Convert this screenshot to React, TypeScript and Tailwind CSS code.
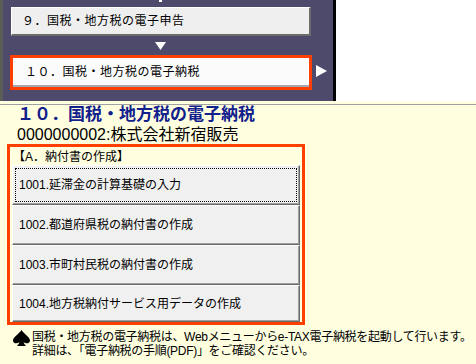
import React from 'react';

const menuItems = [
  '1001.延滞金の計算基礎の入力',
  '1002.都道府県税の納付書の作成',
  '1003.市町村民税の納付書の作成',
  '1004.地方税納付サービス用データの作成',
];

const App: React.FC = () => {
  return (
    <div className="w-[476px] h-[364px] overflow-hidden bg-[#ffffe0] text-black font-['Liberation_Sans','Noto_Sans_CJK_JP',sans-serif]">
      {/* top navigation strip */}
      <div className="flex h-[101px]">
        <div className="w-[3px] bg-[#5b5e57]" />
        <div className="w-[330px] bg-[#4e4a6b] flex flex-col pl-[8px]">
          <div className="h-[7px] pl-[148px]">
            <div className="w-[3px] h-[2px] bg-white" />
          </div>
          <div className="w-[300px] h-[29px] flex items-center pl-[10px] bg-[#efefef] border-t border-l border-white border-b-2 border-r-2 border-b-[#6b6b6b] border-r-[#6b6b6b] text-[12px] leading-none tracking-[0.5px]">
            ９．国税・地方税の電子申告
          </div>
          <div className="h-[19px] pl-[144px] pt-[6px]">
            <svg width="11" height="8" viewBox="0 0 11 8">
              <polygon points="0,0 11,0 5.5,8" fill="white" />
            </svg>
          </div>
          <div className="flex items-start -ml-[1px]">
            <div className="w-[302px] h-[35px] border-[3px] border-[#ff4000] bg-[#fbfbfb] flex flex-col">
              <div className="flex-1 flex items-center pl-[12px] text-[12px] leading-none tracking-[0.5px]">
                １０．国税・地方税の電子納税
              </div>
              <div className="h-[2px] bg-[#a8a8b0]" />
            </div>
            <svg width="11" height="12" viewBox="0 0 11 12" className="ml-[4px] mt-[10px]">
              <polygon points="0,0 11,6 0,12" fill="white" />
            </svg>
          </div>
        </div>
        <div className="w-[3px] bg-black" />
        <div className="flex-1 bg-white" />
      </div>
      <div className="h-[3px]" />
      <div className="h-px bg-[#a0a0a0]" />

      {/* heading */}
      <div className="pl-[17px]">
        <div className="text-[17px] font-bold leading-[20px] text-[#10208c]">
          １０．国税・地方税の電子納税
        </div>
        <div className="text-[16px] leading-[19px]">0000000002:株式会社新宿販売</div>
      </div>

      {/* section box */}
      <div className="ml-[7px] w-[298px] border-[3px] border-[#ff4000] px-[2px] pt-[2px]">
        <div className="h-[16px] pl-[1px] text-[12px] leading-[16px]">【A．納付書の作成】</div>
        {menuItems.map((label, i) => (
          <div
            key={label}
            className={`${i === 3 ? 'h-[37px]' : 'h-[40px]'} bg-[#f0f0f0] border-t border-l border-white border-b border-r border-b-[#696969] border-r-[#696969] shadow-[inset_-1px_-1px_0_#a0a0a0] p-[3px]`}
          >
            <div
              className={`h-full flex items-center pl-[3px] text-[12px] leading-none ${
                i === 0 ? 'outline-1 outline-dotted outline-black' : ''
              }`}
            >
              {label}
            </div>
          </div>
        ))}
      </div>

      {/* note */}
      <div className="flex pl-[13px] mt-[5px]">
        <svg width="17" height="16" viewBox="0 0 17 16" className="shrink-0">
          <path
            d="M8.5 0 C6 4 0 7 0 10.5 C0 13 3 14.5 6.5 12.3 C6 13.8 5 15 3.8 16 L13.2 16 C12 15 11 13.8 10.5 12.3 C14 14.5 17 13 17 10.5 C17 7 11 4 8.5 0 Z"
            fill="black"
          />
        </svg>
        <div className="ml-[2px] text-[12px] leading-[14px] whitespace-nowrap tracking-[-0.3px]">
          <div>国税・地方税の電子納税は、Webメニューからe-TAX電子納税を起動して行います。</div>
          <div>詳細は、「電子納税の手順(PDF)」をご確認ください。</div>
        </div>
      </div>
    </div>
  );
};

export default App;
